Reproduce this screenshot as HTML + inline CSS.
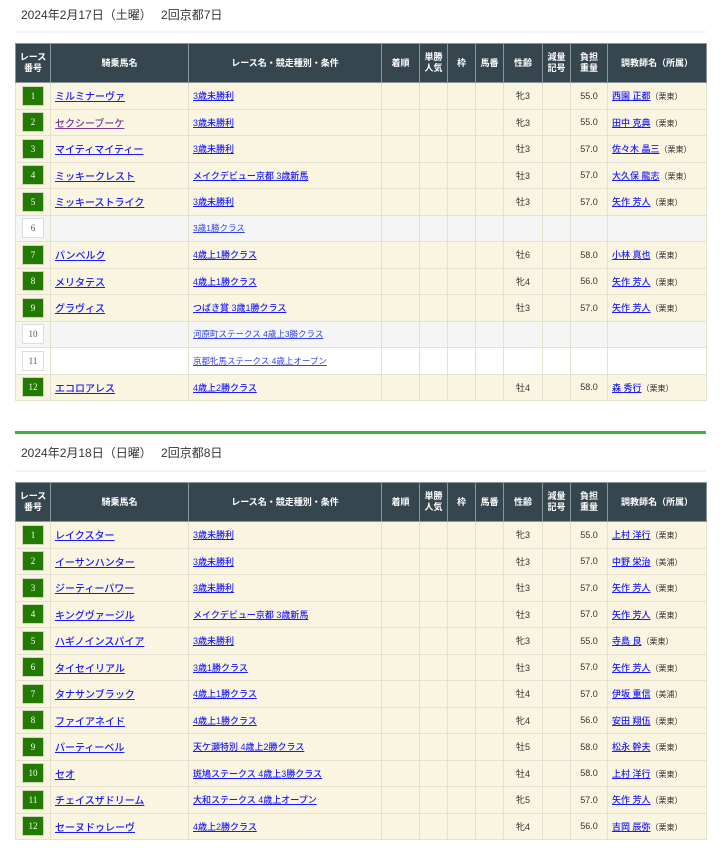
<!DOCTYPE html>
<html><head><meta charset="utf-8"><style>
body{margin:0;background:#fff;font-family:"Liberation Sans","Noto Sans CJK JP",sans-serif;color:#333;width:720px;height:848px;overflow:hidden;position:relative}
.date{position:absolute;left:21px;font-size:12px;color:#333}
.hl{position:absolute;left:15px;width:691px;height:2px;background:#f3f3f3}
.gl{position:absolute;left:15px;width:691px;height:3px;background:#3cb43c}
table{position:absolute;left:15px;width:691px;border-collapse:collapse;table-layout:fixed;font-size:9px}
th{background:#36464f;color:#fff;font-weight:bold;border:1px solid #8a959b;height:38px;padding:0;line-height:11px;font-size:9px}
td{border:1px solid #e4e1d3;height:25.5px;padding:0;background:#f9f5e1;text-align:center;white-space:nowrap;overflow:hidden}
tr.g td{background:#f5f5f5}tr.w td{background:#fff}
td.l{text-align:left;padding-left:4px}
td.h a{font-size:10px;font-weight:500}
a{color:#1a1aff;text-decoration:underline;font-weight:500}
a.v{color:#7a3a9a}
td a.s{font-size:8.5px;color:#3344ee;font-weight:normal}
.n{display:inline-block;width:20px;height:18px;line-height:18px;background:#227a00;color:#fff;font-size:9px;font-family:"Liberation Serif",serif;border:1px solid #cfd6c0}
.o{display:inline-block;width:20px;height:18px;line-height:18px;background:#fff;color:#555;font-size:9px;font-family:"Liberation Serif",serif;border:1px solid #ddd}
.af{font-size:8px;color:#333}
</style></head><body>
<div class="date" style="top:6px">2024年2月17日（土曜）　 2回京都7日</div>
<div class="hl" style="top:31px"></div>
<table style="top:43px">
<colgroup><col style="width:35px"><col style="width:138px"><col style="width:193px"><col style="width:38px"><col style="width:28px"><col style="width:28px"><col style="width:28px"><col style="width:39px"><col style="width:28px"><col style="width:37px"><col style="width:99px"></colgroup>
<tr><th>レース<br>番号</th><th>騎乗馬名</th><th>レース名・競走種別・条件</th><th>着順</th><th>単勝<br>人気</th><th>枠</th><th>馬番</th><th>性齢</th><th>減量<br>記号</th><th>負担<br>重量</th><th>調教師名（所属）</th></tr>
<tr><td><span class="n">1</span></td><td class="l h"><a>ミルミナーヴァ</a></td><td class="l"><a>3歳未勝利</a></td><td></td><td></td><td></td><td></td><td>牝3</td><td></td><td>55.0</td><td class="l"><a>西園 正都</a><span class="af">（栗東）</span></td></tr>
<tr><td><span class="n">2</span></td><td class="l h"><a class="v">セクシーブーケ</a></td><td class="l"><a>3歳未勝利</a></td><td></td><td></td><td></td><td></td><td>牝3</td><td></td><td>55.0</td><td class="l"><a>田中 克典</a><span class="af">（栗東）</span></td></tr>
<tr><td><span class="n">3</span></td><td class="l h"><a>マイティマイティー</a></td><td class="l"><a>3歳未勝利</a></td><td></td><td></td><td></td><td></td><td>牡3</td><td></td><td>57.0</td><td class="l"><a>佐々木 晶三</a><span class="af">（栗東）</span></td></tr>
<tr><td><span class="n">4</span></td><td class="l h"><a>ミッキークレスト</a></td><td class="l"><a>メイクデビュー京都 3歳新馬</a></td><td></td><td></td><td></td><td></td><td>牡3</td><td></td><td>57.0</td><td class="l"><a>大久保 龍志</a><span class="af">（栗東）</span></td></tr>
<tr><td><span class="n">5</span></td><td class="l h"><a>ミッキーストライク</a></td><td class="l"><a>3歳未勝利</a></td><td></td><td></td><td></td><td></td><td>牡3</td><td></td><td>57.0</td><td class="l"><a>矢作 芳人</a><span class="af">（栗東）</span></td></tr>
<tr class="g"><td><span class="o">6</span></td><td></td><td class="l"><a class="s">3歳1勝クラス</a></td><td></td><td></td><td></td><td></td><td></td><td></td><td></td><td></td></tr>
<tr><td><span class="n">7</span></td><td class="l h"><a>パンベルク</a></td><td class="l"><a>4歳上1勝クラス</a></td><td></td><td></td><td></td><td></td><td>牡6</td><td></td><td>58.0</td><td class="l"><a>小林 真也</a><span class="af">（栗東）</span></td></tr>
<tr><td><span class="n">8</span></td><td class="l h"><a>メリタテス</a></td><td class="l"><a>4歳上1勝クラス</a></td><td></td><td></td><td></td><td></td><td>牝4</td><td></td><td>56.0</td><td class="l"><a>矢作 芳人</a><span class="af">（栗東）</span></td></tr>
<tr><td><span class="n">9</span></td><td class="l h"><a>グラヴィス</a></td><td class="l"><a>つばき賞 3歳1勝クラス</a></td><td></td><td></td><td></td><td></td><td>牡3</td><td></td><td>57.0</td><td class="l"><a>矢作 芳人</a><span class="af">（栗東）</span></td></tr>
<tr class="g"><td><span class="o">10</span></td><td></td><td class="l"><a class="s">河原町ステークス 4歳上3勝クラス</a></td><td></td><td></td><td></td><td></td><td></td><td></td><td></td><td></td></tr>
<tr class="w"><td><span class="o">11</span></td><td></td><td class="l"><a class="s">京都牝馬ステークス 4歳上オープン</a></td><td></td><td></td><td></td><td></td><td></td><td></td><td></td><td></td></tr>
<tr><td><span class="n">12</span></td><td class="l h"><a>エコロアレス</a></td><td class="l"><a>4歳上2勝クラス</a></td><td></td><td></td><td></td><td></td><td>牡4</td><td></td><td>58.0</td><td class="l"><a>森 秀行</a><span class="af">（栗東）</span></td></tr>
</table>
<div class="gl" style="top:431px"></div>
<div class="date" style="top:444px">2024年2月18日（日曜）　 2回京都8日</div>
<div class="hl" style="top:470px"></div>
<table style="top:482px">
<colgroup><col style="width:35px"><col style="width:138px"><col style="width:193px"><col style="width:38px"><col style="width:28px"><col style="width:28px"><col style="width:28px"><col style="width:39px"><col style="width:28px"><col style="width:37px"><col style="width:99px"></colgroup>
<tr><th>レース<br>番号</th><th>騎乗馬名</th><th>レース名・競走種別・条件</th><th>着順</th><th>単勝<br>人気</th><th>枠</th><th>馬番</th><th>性齢</th><th>減量<br>記号</th><th>負担<br>重量</th><th>調教師名（所属）</th></tr>
<tr><td><span class="n">1</span></td><td class="l h"><a>レイクスター</a></td><td class="l"><a>3歳未勝利</a></td><td></td><td></td><td></td><td></td><td>牝3</td><td></td><td>55.0</td><td class="l"><a>上村 洋行</a><span class="af">（栗東）</span></td></tr>
<tr><td><span class="n">2</span></td><td class="l h"><a>イーサンハンター</a></td><td class="l"><a>3歳未勝利</a></td><td></td><td></td><td></td><td></td><td>牡3</td><td></td><td>57.0</td><td class="l"><a>中野 栄治</a><span class="af">（美浦）</span></td></tr>
<tr><td><span class="n">3</span></td><td class="l h"><a>ジーティーパワー</a></td><td class="l"><a>3歳未勝利</a></td><td></td><td></td><td></td><td></td><td>牡3</td><td></td><td>57.0</td><td class="l"><a>矢作 芳人</a><span class="af">（栗東）</span></td></tr>
<tr><td><span class="n">4</span></td><td class="l h"><a>キングヴァージル</a></td><td class="l"><a>メイクデビュー京都 3歳新馬</a></td><td></td><td></td><td></td><td></td><td>牡3</td><td></td><td>57.0</td><td class="l"><a>矢作 芳人</a><span class="af">（栗東）</span></td></tr>
<tr><td><span class="n">5</span></td><td class="l h"><a>ハギノインスパイア</a></td><td class="l"><a>3歳未勝利</a></td><td></td><td></td><td></td><td></td><td>牝3</td><td></td><td>55.0</td><td class="l"><a>寺島 良</a><span class="af">（栗東）</span></td></tr>
<tr><td><span class="n">6</span></td><td class="l h"><a>タイセイリアル</a></td><td class="l"><a>3歳1勝クラス</a></td><td></td><td></td><td></td><td></td><td>牡3</td><td></td><td>57.0</td><td class="l"><a>矢作 芳人</a><span class="af">（栗東）</span></td></tr>
<tr><td><span class="n">7</span></td><td class="l h"><a>タナサンブラック</a></td><td class="l"><a>4歳上1勝クラス</a></td><td></td><td></td><td></td><td></td><td>牡4</td><td></td><td>57.0</td><td class="l"><a>伊坂 重信</a><span class="af">（美浦）</span></td></tr>
<tr><td><span class="n">8</span></td><td class="l h"><a>ファイアネイド</a></td><td class="l"><a>4歳上1勝クラス</a></td><td></td><td></td><td></td><td></td><td>牝4</td><td></td><td>56.0</td><td class="l"><a>安田 翔伍</a><span class="af">（栗東）</span></td></tr>
<tr><td><span class="n">9</span></td><td class="l h"><a>パーティーベル</a></td><td class="l"><a>天ケ瀬特別 4歳上2勝クラス</a></td><td></td><td></td><td></td><td></td><td>牡5</td><td></td><td>58.0</td><td class="l"><a>松永 幹夫</a><span class="af">（栗東）</span></td></tr>
<tr><td><span class="n">10</span></td><td class="l h"><a>セオ</a></td><td class="l"><a>斑鳩ステークス 4歳上3勝クラス</a></td><td></td><td></td><td></td><td></td><td>牡4</td><td></td><td>58.0</td><td class="l"><a>上村 洋行</a><span class="af">（栗東）</span></td></tr>
<tr><td><span class="n">11</span></td><td class="l h"><a>チェイスザドリーム</a></td><td class="l"><a>大和ステークス 4歳上オープン</a></td><td></td><td></td><td></td><td></td><td>牝5</td><td></td><td>57.0</td><td class="l"><a>矢作 芳人</a><span class="af">（栗東）</span></td></tr>
<tr><td><span class="n">12</span></td><td class="l h"><a>セーヌドゥレーヴ</a></td><td class="l"><a>4歳上2勝クラス</a></td><td></td><td></td><td></td><td></td><td>牝4</td><td></td><td>56.0</td><td class="l"><a>吉岡 辰弥</a><span class="af">（栗東）</span></td></tr>
</table>
</body></html>
